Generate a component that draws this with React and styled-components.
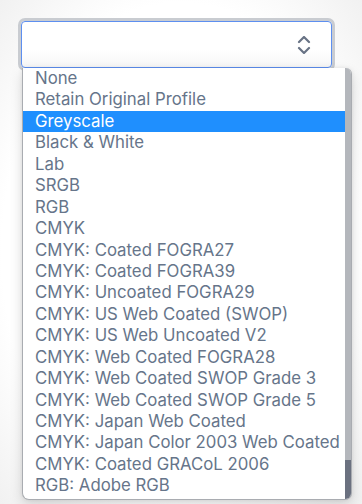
import styled, { createGlobalStyle } from 'styled-components';

const profiles = [
  'None',
  'Retain Original Profile',
  'Greyscale',
  'Black & White',
  'Lab',
  'SRGB',
  'RGB',
  'CMYK',
  'CMYK: Coated FOGRA27',
  'CMYK: Coated FOGRA39',
  'CMYK: Uncoated FOGRA29',
  'CMYK: US Web Coated (SWOP)',
  'CMYK: US Web Uncoated V2',
  'CMYK: Web Coated FOGRA28',
  'CMYK: Web Coated SWOP Grade 3',
  'CMYK: Web Coated SWOP Grade 5',
  'CMYK: Japan Web Coated',
  'CMYK: Japan Color 2003 Web Coated',
  'CMYK: Coated GRACoL 2006',
  'RGB: Adobe RGB',
];

export default function App() {
  return (
    <>
      <GlobalStyle />
      <Page>
        <SelectWrap>
          <SelectBox>
            <svg width="14" height="18" viewBox="0 0 14 18" fill="none">
              <path d="M2 6l5-5 5 5M2 12l5 5 5-5" stroke="#687385" strokeWidth="2.2" strokeLinecap="round" strokeLinejoin="round" />
            </svg>
          </SelectBox>
          <Menu>
            <Options>
              {profiles.map((p) => (
                <Option key={p} selected={p === 'Greyscale'}>
                  {p}
                </Option>
              ))}
            </Options>
            <Scrollbar>
              <Thumb />
            </Scrollbar>
          </Menu>
        </SelectWrap>
      </Page>
    </>
  );
}

const GlobalStyle = createGlobalStyle`
  body {
    margin: 0;
    background: #fff;
    font-family: Inter, "Noto Sans", sans-serif;
  }
`;

const Page = styled.div`
  width: 362px;
  height: 504px;
  padding: 19px;
  box-sizing: border-box;
  overflow: hidden;
  background: radial-gradient(ellipse at 50% 50%, #fff 70%, #f1f1f1 100%);
`;

const SelectWrap = styled.div`
  position: relative;
  width: 315px;
`;

const SelectBox = styled.div`
  height: 47px;
  margin: 2px;
  box-sizing: border-box;
  border: 1px solid #5d8ff0;
  border-radius: 4px;
  box-shadow: 0 0 0 3px #c9ccd1;
  background: linear-gradient(#fff 60%, #f6f6f6);
  display: flex;
  align-items: center;
  justify-content: flex-end;
  padding-right: 20px;
`;

const Menu = styled.div`
  position: absolute;
  top: 47px;
  left: 3px;
  width: 328px;
  height: 431px;
  display: flex;
  background: #fff;
  border: 1px solid #a9acb1;
  border-top: none;
  border-radius: 0 6px 7px 7px;
  box-shadow: 0 6px 14px rgba(0, 0, 0, 0.14), 0 0 4px rgba(0, 0, 0, 0.08);
  overflow: hidden;
`;

const Options = styled.ul`
  flex: 1;
  list-style: none;
  margin: 0;
  padding: 0;
`;

const Option = styled.li`
  height: 21.45px;
  line-height: 21.45px;
  padding-left: 12px;
  font-size: 16.8px;
  white-space: nowrap;
  color: ${(p) => (p.selected ? '#fff' : '#66758a')};
  background: ${(p) => (p.selected ? '#1f8ffe' : 'transparent')};
`;

const Scrollbar = styled.div`
  width: 6px;
  background: #b4b7bc;
  display: flex;
  flex-direction: column;
  justify-content: flex-end;
`;

const Thumb = styled.div`
  height: 39px;
  background: #6b7180;
`;
